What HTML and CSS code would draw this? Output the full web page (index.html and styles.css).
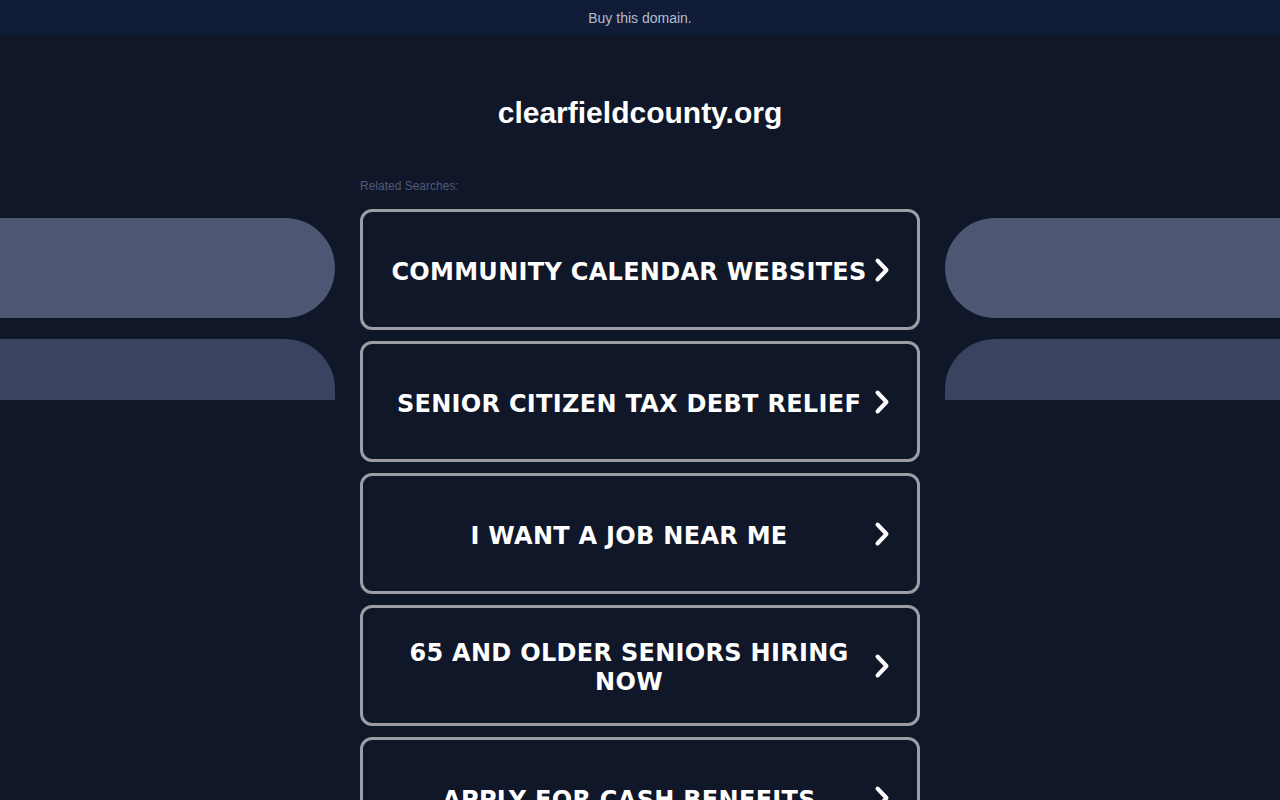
FILE: index.html
```html
<!DOCTYPE html>
<html>
<head>
<meta charset="utf-8">
<link rel="stylesheet" href="styles.css">
</head>
<body>
<div class="topbar"><a class="buy" href="#">Buy this domain.</a></div>
<div class="deco deco-l1"></div>
<div class="deco deco-l2"></div>
<div class="deco deco-r1"></div>
<div class="deco deco-r2"></div>
<main class="main">
  <h1 class="domain">clearfieldcounty.org</h1>
  <div class="related">Related Searches:</div>
  <ul class="links">
    <li><a class="link" href="#"><span class="label">COMMUNITY CALENDAR WEBSITES</span><svg class="chev" viewBox="0 0 16 26" width="16" height="26"><path d="M3.5 3.5 L12.5 13 L3.5 22.5" fill="none" stroke="#fff" stroke-width="4" stroke-linecap="round" stroke-linejoin="round"/></svg></a></li>
    <li><a class="link" href="#"><span class="label">SENIOR CITIZEN TAX DEBT RELIEF</span><svg class="chev" viewBox="0 0 16 26" width="16" height="26"><path d="M3.5 3.5 L12.5 13 L3.5 22.5" fill="none" stroke="#fff" stroke-width="4" stroke-linecap="round" stroke-linejoin="round"/></svg></a></li>
    <li><a class="link" href="#"><span class="label">I WANT A JOB NEAR ME</span><svg class="chev" viewBox="0 0 16 26" width="16" height="26"><path d="M3.5 3.5 L12.5 13 L3.5 22.5" fill="none" stroke="#fff" stroke-width="4" stroke-linecap="round" stroke-linejoin="round"/></svg></a></li>
    <li><a class="link" href="#"><span class="label">65 AND OLDER SENIORS HIRING NOW</span><svg class="chev" viewBox="0 0 16 26" width="16" height="26"><path d="M3.5 3.5 L12.5 13 L3.5 22.5" fill="none" stroke="#fff" stroke-width="4" stroke-linecap="round" stroke-linejoin="round"/></svg></a></li>
    <li><a class="link" href="#"><span class="label">APPLY FOR CASH BENEFITS</span><svg class="chev" viewBox="0 0 16 26" width="16" height="26"><path d="M3.5 3.5 L12.5 13 L3.5 22.5" fill="none" stroke="#fff" stroke-width="4" stroke-linecap="round" stroke-linejoin="round"/></svg></a></li>
  </ul>
</main>
</body>
</html>
```
FILE: styles.css
```css
html, body {
  margin: 0;
  padding: 0;
  background: #101729;
  overflow: hidden;
}
body {
  font-family: "Liberation Sans", Arial, sans-serif;
  color: #fff;
  position: relative;
  min-height: 800px;
}
.topbar {
  height: 35px;
  background: #111c38;
  display: flex;
  align-items: center;
  justify-content: center;
}
.buy {
  color: #b4bccd;
  font-size: 14px;
  text-decoration: none;
  margin-top: 1px;
}
.deco {
  position: absolute;
  width: 335px;
}
.deco-l1 {
  left: 0;
  top: 218px;
  height: 100px;
  background: #4d5673;
  border-radius: 0 50px 50px 0;
}
.deco-l2 {
  left: 0;
  top: 339px;
  height: 61px;
  background: #3a4360;
  border-radius: 0 50px 0 0;
}
.deco-r1 {
  right: 0;
  top: 218px;
  height: 100px;
  background: #4d5673;
  border-radius: 50px 0 0 50px;
}
.deco-r2 {
  right: 0;
  top: 339px;
  height: 61px;
  background: #3a4360;
  border-radius: 50px 0 0 0;
}
.main {
  width: 560px;
  margin: 0 auto;
  position: relative;
  z-index: 1;
}
.domain {
  margin: 0;
  padding-top: 60px;
  height: 35px;
  line-height: 35px;
  text-align: center;
  font-size: 30px;
  font-weight: bold;
  color: #fff;
}
.related {
  margin-top: 49px;
  font-size: 12px;
  color: #4d5a7b;
  height: 14px;
  line-height: 14px;
}
.links {
  list-style: none;
  margin: 16px 0 0;
  padding: 0;
  display: flex;
  flex-direction: column;
  gap: 11px;
}
.link {
  box-sizing: border-box;
  height: 121px;
  border: 3px solid #9d9da5;
  border-radius: 12px;
  display: flex;
  align-items: center;
  padding: 0 27px 0 25px;
  text-decoration: none;
  color: #fff;
}
.label {
  flex: 1;
  text-align: center;
  font-family: "DejaVu Sans", Verdana, sans-serif;
  font-weight: bold;
  font-size: 24px;
  line-height: 29px;
  letter-spacing: 0.3px;
  padding-top: 5px;
}
.chev {
  flex: none;
  margin-left: 4px;
}
```
